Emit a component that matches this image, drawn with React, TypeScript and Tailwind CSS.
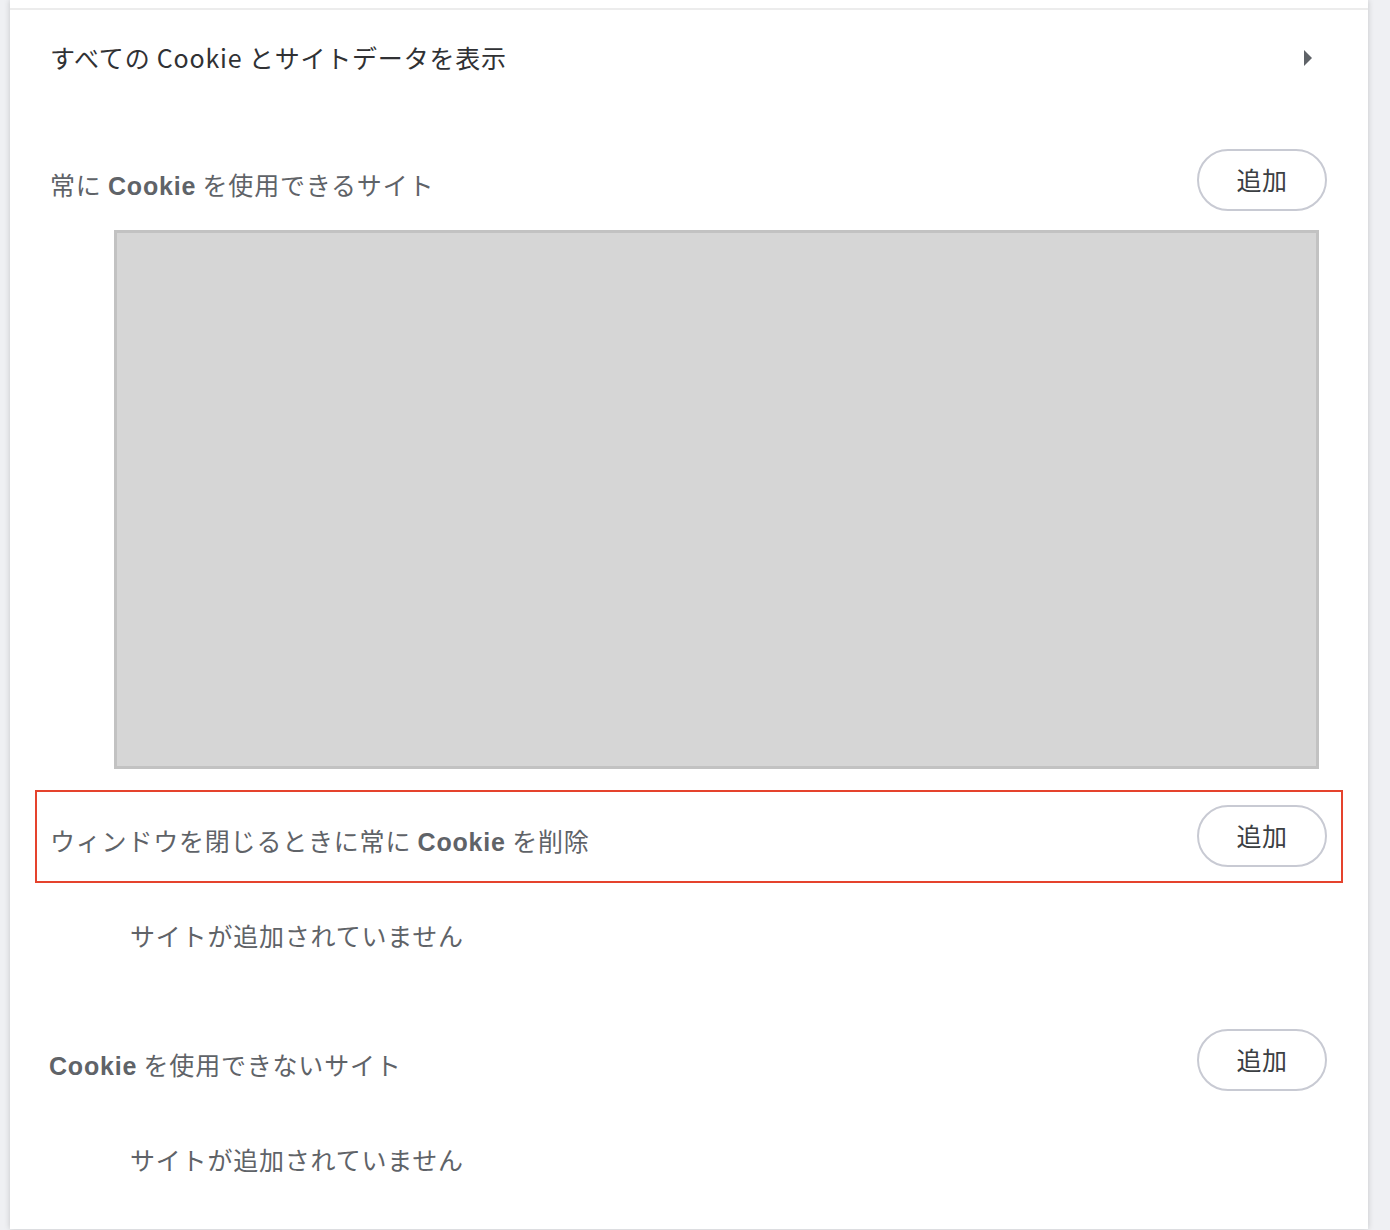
import React from 'react';

const jp = { fontFamily: '"Noto Sans CJK JP", "Noto Sans", sans-serif' };

function AddButton() {
    return (
        <button
            className="h-[62px] w-[130px] shrink-0 rounded-full border-2 border-[#c8cad3] bg-white text-[25px] tracking-[0.5px] text-[#3c4043]"
            style={jp}
        >
            追加
        </button>
    );
}

function CookieWord() {
    return (
        <span className="font-bold" style={{ fontFamily: '"Liberation Sans", Arial, sans-serif' }}>
            Cookie
        </span>
    );
}

function SectionHeader({ children }: { children: React.ReactNode }) {
    return (
        <div className="flex h-[62px] items-center justify-between">
            <span className="mt-[12px] text-[25px] tracking-[0.8px] text-[#5f6368]">{children}</span>
            <AddButton />
        </div>
    );
}

export default function App() {
    return (
        <div className="min-h-[1230px] w-full overflow-hidden bg-[#eff0f3]" style={jp}>
            <div className="ml-[10px] w-[1358px] bg-white shadow-[0_0_6px_rgba(0,0,0,0.18)]">
                {/* previous row edge */}
                <div className="h-[8px]" />
                <div className="h-[2px] bg-[#ececec]" />

                {/* all cookies link */}
                <div className="flex h-[96px] items-center justify-between pl-[40px] pr-[56px]">
                    <span className="text-[25px] tracking-[0.8px] text-[#303134]">すべての Cookie とサイトデータを表示</span>
                    <svg width="8" height="16" viewBox="0 0 8 16" className="mt-[-1px]">
                        <path d="M0 0 L8 8 L0 16 Z" fill="#5f6368" />
                    </svg>
                </div>

                {/* allowed */}
                <div className="mt-[43px] pl-[40px] pr-[41px]">
                    <SectionHeader>
                        常に <CookieWord /> を使用できるサイト
                    </SectionHeader>
                </div>
                <div className="ml-[104px] mt-[19px] h-[539px] w-[1205px] border-[3px] border-[#c2c2c2] bg-[#d6d6d6]" />

                {/* clear on exit, highlighted */}
                <div className="mx-[25px] mt-[21px] border-2 border-[#e5432d] pb-[14px] pl-[13px] pr-[14px] pt-[13px]">
                    <SectionHeader>
                        ウィンドウを閉じるときに常に <CookieWord /> を削除
                    </SectionHeader>
                </div>
                <div className="flex h-[106px] items-center pl-[120px] text-[25px] tracking-[0.8px] text-[#5f6368]">
                    サイトが追加されていません
                </div>

                {/* blocked */}
                <div className="mt-[40px] pl-[39px] pr-[41px]">
                    <SectionHeader>
                        <CookieWord /> を使用できないサイト
                    </SectionHeader>
                </div>
                <div className="flex h-[138px] items-center pl-[120px] text-[25px] tracking-[0.8px] text-[#5f6368]">
                    サイトが追加されていません
                </div>
            </div>
        </div>
    );
}
